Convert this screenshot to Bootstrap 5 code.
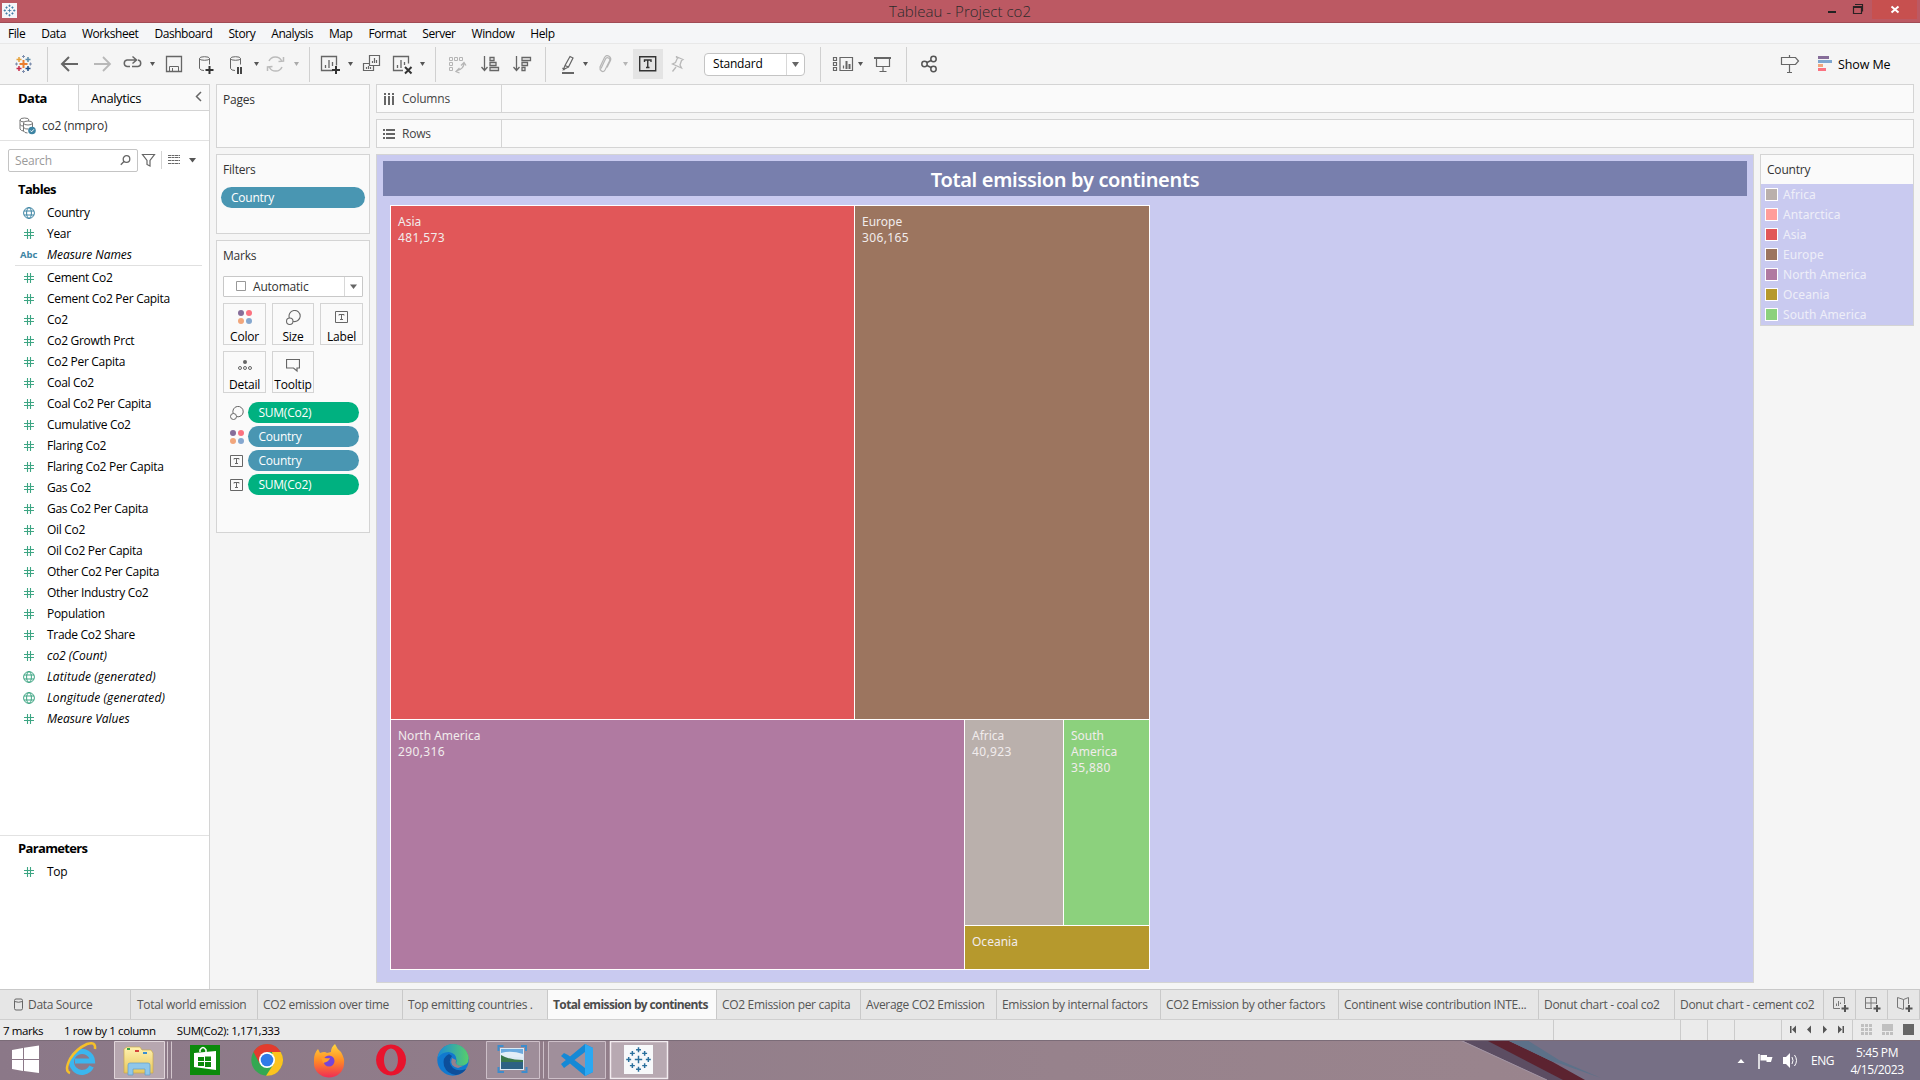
<!DOCTYPE html>
<html lang="en">
<head>
<meta charset="utf-8">
<title>Tableau - Project co2</title>
<link href="https://cdn.jsdelivr.net/npm/bootstrap@5.3.0/dist/css/bootstrap.min.css" rel="stylesheet">
<script src="https://cdn.jsdelivr.net/npm/bootstrap@5.3.0/dist/js/bootstrap.bundle.min.js"></script>
<style>
body{width:1920px;height:1080px;overflow:hidden;background:#f5f5f5;font:12px/16px "Open Sans","Noto Sans",sans-serif;color:#000;letter-spacing:-.2px}
svg{display:block;flex:none}
.titlebar{height:23px;background:#bc5963;border-bottom:1px solid #a04b55}
.titlebar .caption{font-size:15px;line-height:20px;color:#2b2b2b;letter-spacing:.03px;padding-top:1px;font-weight:300}
.menubar{height:21px;background:#f5f6f8;border-bottom:1px solid #e8e8e8;padding:2px 0 0 8px;gap:16px;letter-spacing:-.43px}
.toolbar{height:40px}
.workspace{height:905px}
.datapane{width:210px;background:#fff;border-right:1px solid #d4d4d4;border-top:1px solid #d4d4d4}
.panetabs{height:26px;font-size:13px}
.tab-data{width:78px;padding-left:18px;font-weight:700;letter-spacing:-.5px;padding-top:5px}
.tab-an{border-left:1px solid #d4d4d4;border-bottom:1px solid #d4d4d4;background:#fafafa;padding:5px 7px 0 12px;letter-spacing:-.4px}
.tab-an svg{margin-top:1px}
.source{height:30px;border-bottom:1px solid #e2e2e2;color:#333;padding-left:18px;gap:5px}
.source span{padding-top:1px;letter-spacing:-.25px}
.finder{height:39px;padding:8px 0 0 8px}
.searchbox{width:130px;height:23px;border:1px solid #c4c4c4;border-radius:2px;color:#9a9a9a;padding:0 6px}
.heading{font-size:13px;font-weight:700;padding-left:18px;letter-spacing:-.65px}
.fields{padding-top:5px}
.finder+.heading{padding-top:1px}
.field{height:21px;padding-left:23px;gap:12px;letter-spacing:-.3px}
.field svg{width:12px}
.abc{font-size:9.5px;font-weight:700;color:#3d84a3;width:18px;margin:0 -3px;letter-spacing:0}
.fields i{letter-spacing:-.05px}
.geo{color:#3da583}
.fields .geo i{letter-spacing:.1px}
.dim-geo{color:#3d84a3}
.cut{height:0;border-top:1px solid #e0e0e0;margin:0 7px 0 15px}
.meas{padding-top:1px}
.params{border-top:1px solid #e2e2e2;height:154px;padding-top:4px}
.params .field{margin-top:5px}
.shelves{width:154px;margin-left:6px;gap:6px;color:#333}
.shelf{background:#fafafa;border:1px solid #d4d4d4}
.shelf .cap{padding:7px 0 1px 6px}
.shelf-pages{height:64px}.shelf-filters{height:80px}.shelf-marks{height:293px}
.shelf-filters .pill{margin:8px 4px 0;padding-left:10px}
.pill{height:21px;border-radius:11px;background:#4996b2;color:#fff;padding-left:10.5px;line-height:21px;letter-spacing:-.25px}
.pill.m{background:#00b180}
.mark-type{width:140px;height:21px;border:1px solid #c8c8c8;border-radius:1px;margin:11px 0 0 6px}
.mark-grid{display:grid;grid-template-columns:43px 42px 43px;grid-auto-rows:42px;gap:6px;padding:6px 6px 0}
.mark-grid>div{border:1px solid #d4d4d4;color:#000;display:flex;flex-direction:column;align-items:center;justify-content:space-between;padding:6px 0 0;line-height:15px;letter-spacing:-.2px}
.encodings{padding:9px 10px 0 13px;display:flex;flex-direction:column;gap:3px}
.encodings .pill{width:111px}
.enc{display:flex;align-items:center;gap:4px}
.main{width:1538px;margin-left:6px}
.axis-shelf{height:29px;background:#fafafa;border:1px solid #d4d4d4;margin-bottom:6px;color:#444}
.axis-shelf>div{width:125px;border-right:1px solid #d4d4d4;padding-left:6px;gap:7px}
.sheet{width:1378px;height:829px;background:#c9caf0;border:1px solid #d4d4d4;padding:6px 6px 0}
.sheet-title{height:35px;background:#787fad;color:#fff;font:600 20px/37px "Noto Sans","Open Sans",sans-serif;letter-spacing:-.33px}
.treemap{width:760px;height:765px;background:#fff;padding:1px;gap:1px;margin:9px 0 0 7px;color:#f1ecec;font-family:"Noto Sans",sans-serif;letter-spacing:0}
.treemap .cell{padding:8px 7px}
.treemap .num{letter-spacing:.35px}
.treemap .g{gap:1px}
.treemap .lower{height:249px}
.asia{background:#e15759;width:463px}.europe{background:#9c755f;width:294px}
.namer{background:#b07aa1;width:573px}.africa{background:#bab0ac;width:98px}
.samer{background:#8cd17d;width:85px}.oceania{background:#b6992d;height:43px}
.antarctica{background:#ff9d9a}
.legendbox{width:154px;height:172px;border:1px solid #d4d4d4;background:#c9caf0;margin-left:6px}
.legendbox .cap{height:29px;background:#fafafa;color:#333;padding:7px 0 0 6px}
.legendbox .it{height:20px;padding:1px 0 0 4px;gap:5px;color:#eeeef8;font-family:"Noto Sans",sans-serif;letter-spacing:.1px}
.legendbox .sw{width:13px;height:13px;border:1px solid #fff}
.zoomfit{width:101px;height:23px;border:1px solid #c4c4c4}
.showme{font-size:12.5px;letter-spacing:-.1px;padding-top:1px}
.sheettabs{height:31px;border-top:1px solid #c9c9c9;border-bottom:1px solid #cfcfcf;background:#e6e6e6;color:#555;letter-spacing:-.32px}
.sheettabs>div{border-right:1px solid #c9c9c9;padding-left:5px;white-space:nowrap;display:flex;align-items:center;flex:none}
.sheettabs .on{background:#fafafa;font-weight:700;letter-spacing:-.62px;color:#4c4c4c}
.sheettabs .w1{width:131px}.sheettabs .w2{width:127px;padding-left:6px}.sheettabs .w3{width:145px}.sheettabs .w4{width:145px}.sheettabs .w5{width:169px}.sheettabs .w6{width:144px}.sheettabs .w7{width:136px}.sheettabs .w8{width:164px}.sheettabs .w9{width:178px}.sheettabs .w10{width:200px}.sheettabs .w11{width:136px}.sheettabs .w12{width:149px}.sheettabs .wi{width:32px;padding-left:8px}
.statusbar{height:20px;background:#ebebeb;padding-left:3px;font-size:11.5px;letter-spacing:-.4px}
.statusbar span{margin-right:21px;padding-top:2px}
.taskbar{height:40px;background:linear-gradient(90deg,#8b7888,#97828c 55%,#9b868e);position:relative;border-top:1px solid #7b6c78}
.taskbar>svg.paper{position:absolute;left:1400px;top:0}
.taskbar>.over{position:relative}
.lang{width:30px;padding-left:5px;letter-spacing:-.5px}
.clock{color:#fff;width:84px;padding:3px 2px 0 0;line-height:17px;letter-spacing:-.4px}
</style>
</head>
<body class="d-flex flex-column">
<svg width="0" height="0" class="position-absolute">
<symbol id="hash" viewBox="0 0 12 12"><path d="M4.500 1v10M7.500 1v10M1 4.500h10M1 7.500h10" stroke="#3da583" stroke-width="1.100" fill="none"/></symbol>
<symbol id="globe" viewBox="0 0 12 12"><g fill="none" stroke="currentColor"><circle cx="6" cy="6" r="5.400"/><ellipse cx="6" cy="6" rx="2.400" ry="5.400"/><path d="M1 4h10M1 8h10"/></g></symbol>
<symbol id="tbox" viewBox="0 0 14 14"><path d="M.5 1.500h12v11H.5z" fill="none" stroke="#666"/><path d="M4 5.500v-1h5v1M6.500 4.500v5M5 9.500h3" fill="none" stroke="#666"/></symbol>
<symbol id="dots" viewBox="0 0 14 14"><circle cx="3" cy="3" r="3" fill="#866d99"/><circle cx="11" cy="3" r="3" fill="#fb7280"/><circle cx="3" cy="11" r="3" fill="#f1a67c"/><circle cx="11" cy="11" r="3" fill="#85a7cf"/></symbol>
<symbol id="size" viewBox="0 0 14 14"><g fill="none" stroke="#666"><path d="M3.200 7.500A5.200 5.200 0 1 1 6.600 10.600"/><circle cx="3.500" cy="10.500" r="3"/></g></symbol>
<symbol id="plusmark" viewBox="0 0 22 22"><g fill="none" stroke="#2a6f9c" stroke-width="1.200"><path d="M11 8v6M8 11h6M6 4v4M4 6h4M16 4v4M14 6h4M6 14v4M4 16h4M16 14v4M14 16h4M11 1v4M9 3h4M11 17v4M9 19h4M3 9v4M1 11h4M19 9v4M17 11h4"/></g></symbol>
</svg>

<header class="titlebar d-flex flex-shrink-0">
<svg width="810" height="22" viewBox="0 0 810 22"><path d="M2 3h15v15H2z" fill="#f5f5f8"/><use href="#plusmark" x="3" y="4" width="13" height="13"/></svg>
<div class="caption text-center flex-grow-1">Tableau - Project co2</div>
<svg width="810" height="22" viewBox="1110 0 810 22"><path d="M1828 11h8v2h-8z" fill="#222"/><path d="M1853.500 6.500h8v7h-8zM1853 7.500h9M1855 4.500h7.500v7" fill="none" stroke="#2a2224" stroke-width="1.200"/><path d="M1872 0h45v19h-45z" fill="#c7504f"/><path d="M1891.500 6.500l7 6M1898.500 6.500l-7 6" stroke="#fff" stroke-width="2"/></svg>
</header>

<nav class="menubar d-flex align-items-center flex-shrink-0"><span>File</span><span>Data</span><span>Worksheet</span><span>Dashboard</span><span>Story</span><span>Analysis</span><span>Map</span><span>Format</span><span>Server</span><span>Window</span><span>Help</span></nav>

<div class="toolbar d-flex flex-shrink-0">
<svg width="48" height="40" viewBox="0 44 48 40" fill="none" stroke-width="1.500"><path d="M23.500 60v8M19.500 64h8" stroke="#eb7d2f" stroke-width="2"/><path d="M19 57v5M16.500 59.500h5" stroke="#e5a13a"/><path d="M28 57v5M25.500 59.500h5" stroke="#5b8aa8"/><path d="M19 66v5M16.500 68.500h5" stroke="#c72b4a"/><path d="M28 66v5M25.500 68.500h5" stroke="#1f4b84"/><path d="M23.500 55v3M22 56.500h3M23.500 70v3M22 71.500h3M16.500 62.500v3M15 64h3M30.500 62.500v3M29 64h3" stroke="#7f8fae" stroke-width="1"/><path d="M47.500 47v35" stroke="#d0d0d0" stroke-width="1"/></svg>
<svg width="71" height="40" viewBox="48 44 71 40" fill="none"><path d="M69 57l-7 7 7 7M62 64h16" stroke="#666" stroke-width="2"/><path d="M103 57l7 7-7 7M94 64h16" stroke="#b8b8b8" stroke-width="1.800"/></svg>
<svg width="42" height="40" viewBox="119 44 42 40" fill="none" stroke="#666" stroke-width="1.500"><path d="M130 66.500h-3a3.300 3.300 0 0 1 0-6.500h9M132.500 56.500l4 3.500-4 3.500M138 60a3.300 3.300 0 0 1 0 6.500h-6"/><path d="M150 62h5l-2.500 4z" fill="#555" stroke="none"/></svg>
<svg width="32" height="40" viewBox="161 44 32 40" fill="none" stroke="#666"><path d="M166.500 56.500h15v15h-15z" stroke-width="1.300"/><path d="M169.500 71.500v-5h9v5M172.500 71v-3"/></svg>
<svg width="69" height="40" viewBox="193 44 69 40" fill="none" stroke="#666"><ellipse cx="204.500" cy="58.500" rx="5" ry="1.800"/><path d="M199.500 58.500v10q1 2 4.500 2M209.500 58.500v6"/><path d="M209.500 66v8M205.500 70h8" stroke="#333" stroke-width="2"/><ellipse cx="235.500" cy="58.500" rx="5" ry="1.800"/><path d="M230.500 58.500v10q1 2 4.500 2M240.500 58.500v6"/><path d="M238 67v7M241 67v7" stroke="#333" stroke-width="1.800"/><path d="M254 62h5l-2.500 4z" fill="#555" stroke="none"/></svg>
<svg width="48" height="40" viewBox="262 44 48 40" fill="none" stroke="#bbb" stroke-width="1.500"><path d="M269 61a7 7 0 0 1 12.500-.5M282 67a7 7 0 0 1-12.500.5M278.500 61.500l5-.5v-4M272.500 66.500l-5 .5v4"/><path d="M294 62h5l-2.500 4z" fill="#aaa" stroke="none"/><path d="M309.500 47v35" stroke="#d0d0d0" stroke-width="1"/></svg>
<svg width="47" height="40" viewBox="310 44 47 40" fill="none" stroke="#666" stroke-width="1.300"><path d="M333 70.500h-11.500v-14h15v9M325.500 68v-3M329 68v-8M332.500 66v-4"/><path d="M336 66v8M332 70h8" stroke="#333" stroke-width="2"/><path d="M348 62h5l-2.500 4z" fill="#555" stroke="none"/></svg>
<svg width="32" height="40" viewBox="357 44 32 40" fill="none" stroke="#666" stroke-width="1.200"><path d="M369.500 55.500h10v10h-10zM372.500 63v-2M374.500 63v-5M376.500 63v-3M369 63.500h-5.500v7h10v-4.500M366.500 69v-2M368.500 69v-3M370.500 69v-2"/></svg>
<svg width="47" height="40" viewBox="389 44 47 40" fill="none" stroke="#666" stroke-width="1.300"><path d="M403 70.500h-9.500v-14h15v7M397.500 68v-3M401 68v-8M404.500 65v-3"/><path d="M405 67l6.500 6.500M411.500 67l-6.500 6.500" stroke="#333" stroke-width="2"/><path d="M420 62h5l-2.500 4z" fill="#555" stroke="none"/><path d="M435.500 47v35" stroke="#d0d0d0" stroke-width="1"/></svg>
<svg width="110" height="40" viewBox="436 44 110 40" fill="none" stroke="#666" stroke-width="1.300"><g stroke="#b5b5b5"><path d="M449.500 57.500h3v3h-3zM454.500 57.500h3v3h-3zM459.500 57.500h3v3h-3zM449.500 62.500h3v3h-3zM449.500 67.500h3v3h-3z" stroke-width="1"/><path d="M464 63q0 6-7 7.500M461 65.500l3-3 2 3M459.500 68l-3.500 3.500 3.500 1.500"/></g><path d="M484.500 56v14M481.500 67l3 3.500 3-3.500M490 57.500h4v3h-4zM490 62.500h6v3h-6zM490 67.500h8.500v3H490z"/><path d="M516.500 56v14M513.500 67l3 3.500 3-3.500M522 57.500h8.500v3H522zM522 62.500h5.500v3H522zM522 67.500h3v3h-3z"/><path d="M545.500 47v35" stroke="#d0d0d0" stroke-width="1"/></svg>
<svg width="87" height="40" viewBox="546 44 87 40" fill="none" stroke="#666" stroke-width="1.200"><path d="M570 56.500l3 1.500-4.500 9-3.500-1.500zM565 65.500l-1.500 4 5-2.500M562.500 68l2 2"/><path d="M562 73h12" stroke-width="2"/><path d="M583 62h5l-2.500 4z" fill="#555" stroke="none"/><g stroke="#b5b5b5"><path d="M601 68.500l4.500-9.500q1-2 3-1t1 3l-4.500 9q-1.500 2.500-3.500 1t-1.500-4l4.500-9.500q2-3 4.500-1.200t1.500 4.200l-3.500 7"/></g><path d="M623 62h5l-2.500 4z" fill="#b5b5b5" stroke="none"/></svg>
<svg width="30" height="40" viewBox="633 44 30 40" fill="none" stroke="#333" stroke-width="1.400"><path d="M633 49h30v30h-30z" fill="#e4e4e4" stroke="none"/><path d="M639.700 56.700h16v14h-16zM644.500 62v-2h6.500v2M647.750 60v7.500M646 67.500h3.500"/></svg>
<svg width="41" height="40" viewBox="663 44 41 40" fill="none" stroke="#b8b8b8" stroke-width="1.300"><path d="M676 56.500l7 3-1.500 1-1.500 4.500 1.500 3-9-4 3-1.500 2-4.500zM676 67l-3.500 4.500"/></svg>
<div class="d-flex align-items-center pb-1"><div class="zoomfit d-flex align-items-center bg-white rounded-1 mt-1"><span class="ps-2 flex-grow-1">Standard</span><svg width="18" height="21" viewBox="0 0 18 21"><path d="M.5 0v21" stroke="#d8d8d8"/><path d="M6 8h7l-3.500 5z" fill="#666"/></svg></div></div>
<svg width="102" height="40" viewBox="805 44 102 40" fill="none" stroke="#666" stroke-width="1.200"><path d="M820.500 47v35M906.500 47v35" stroke="#d0d0d0" stroke-width="1"/><path d="M833.500 57.500h3v3h-3zM833.500 62.500h3v3h-3zM833.500 67.500h3v3h-3zM840 57.500h12.500v13H840zM843.500 68.500v-3"/><path d="M846.500 69v-8M849.500 69v-5" stroke-width="2"/><path d="M858 62h5l-2.500 4z" fill="#555" stroke="none"/><path d="M876.500 58v8.500h13V58M883 66.500v5M879.500 71.500h7"/><path d="M874 58h17" stroke-width="2"/></svg>
<svg width="863" height="40" viewBox="907 44 863 40" fill="none" stroke="#555" stroke-width="1.500"><circle cx="924.500" cy="64" r="2.700"/><circle cx="933.500" cy="59" r="2.700"/><circle cx="933.500" cy="69" r="2.700"/><path d="M927 62.500l4-2M927 65.500l4 2"/></svg>
<svg width="68" height="40" viewBox="1770 44 68 40" fill="none" stroke="#666" stroke-width="1.200"><path d="M1781.500 57.500h14l3 3.500-3 3.500h-14zM1789.500 55v2M1789.500 65v7.500M1787 72.500h5"/><g stroke="none"><path d="M1818 56h11v3h-11z" fill="#866d99"/><path d="M1818 60h14v3h-14z" fill="#7ea6cf"/><path d="M1818 64h5v3h-5z" fill="#f1a67c"/><path d="M1818 68h8v3h-8z" fill="#fb7280"/></g></svg>
<span class="showme align-self-center">Show Me</span>
</div>

<main class="workspace d-flex flex-shrink-0">
<aside class="datapane d-flex flex-column flex-shrink-0">
<div class="panetabs d-flex"><div class="tab-data">Data</div><div class="tab-an flex-grow-1 d-flex justify-content-between"><span>Analytics</span><svg width="7" height="12" viewBox="0 0 7 12"><path d="M6 1L1.500 5.500 6 10" fill="none" stroke="#666" stroke-width="1.500"/></svg></div></div>
<div class="source d-flex align-items-center flex-shrink-0"><svg width="19" height="18" viewBox="0 0 19 18" fill="none" stroke="#777"><ellipse cx="6.500" cy="3" rx="4.500" ry="2"/><path d="M2 3v9q1 2 4 2M2 7.500q1 1.500 3 1.500"/><ellipse cx="10" cy="6" rx="4.500" ry="2" fill="#fff"/><path d="M5.500 6v8q1 2 4 2M14.500 6v4M5.500 10.500q2 2 5 1.500"/><circle cx="14" cy="13.500" r="3.800" fill="#3d84a3" stroke="none"/><path d="M12.300 13.500l1.300 1.300 2.300-2.500" stroke="#fff"/></svg><span>co2 (nmpro)</span></div>
<div class="finder d-flex"><div class="searchbox d-flex align-items-center justify-content-between"><span>Search</span><svg width="11" height="11" viewBox="0 0 11 11" fill="none" stroke="#666" stroke-width="1.300"><circle cx="6.500" cy="4" r="3.300"/><path d="M4.200 6.300L.8 9.800"/></svg></div>
<svg width="60" height="23" viewBox="138 149 60 23" fill="none" stroke="#666"><path d="M142.500 154.500h12l-4.500 6v5.500l-3-1.500v-4z" stroke-width="1.200"/><path d="M161.500 151v18" stroke="#d4d4d4"/><path d="M168 155.500h12M168 157.500h12M168 160.500h12M168 163.500h12" stroke-dasharray="3 .5" stroke-width="1"/><path d="M189 158h7l-3.500 4.500z" fill="#555" stroke="none"/></svg></div>
<div class="heading">Tables</div>
<div class="fields">
<div class="field d-flex align-items-center dim-geo"><svg height="12"><use href="#globe"/></svg><span class="text-black">Country</span></div>
<div class="field d-flex align-items-center"><svg height="12"><use href="#hash"/></svg>Year</div>
<div class="field d-flex align-items-center"><span class="abc">Abc</span><i>Measure Names</i></div>
<div class="cut"></div>
<div class="meas">
<div class="field d-flex align-items-center"><svg height="12"><use href="#hash"/></svg>Cement Co2</div>
<div class="field d-flex align-items-center"><svg height="12"><use href="#hash"/></svg>Cement Co2 Per Capita</div>
<div class="field d-flex align-items-center"><svg height="12"><use href="#hash"/></svg>Co2</div>
<div class="field d-flex align-items-center"><svg height="12"><use href="#hash"/></svg>Co2 Growth Prct</div>
<div class="field d-flex align-items-center"><svg height="12"><use href="#hash"/></svg>Co2 Per Capita</div>
<div class="field d-flex align-items-center"><svg height="12"><use href="#hash"/></svg>Coal Co2</div>
<div class="field d-flex align-items-center"><svg height="12"><use href="#hash"/></svg>Coal Co2 Per Capita</div>
<div class="field d-flex align-items-center"><svg height="12"><use href="#hash"/></svg>Cumulative Co2</div>
<div class="field d-flex align-items-center"><svg height="12"><use href="#hash"/></svg>Flaring Co2</div>
<div class="field d-flex align-items-center"><svg height="12"><use href="#hash"/></svg>Flaring Co2 Per Capita</div>
<div class="field d-flex align-items-center"><svg height="12"><use href="#hash"/></svg>Gas Co2</div>
<div class="field d-flex align-items-center"><svg height="12"><use href="#hash"/></svg>Gas Co2 Per Capita</div>
<div class="field d-flex align-items-center"><svg height="12"><use href="#hash"/></svg>Oil Co2</div>
<div class="field d-flex align-items-center"><svg height="12"><use href="#hash"/></svg>Oil Co2 Per Capita</div>
<div class="field d-flex align-items-center"><svg height="12"><use href="#hash"/></svg>Other Co2 Per Capita</div>
<div class="field d-flex align-items-center"><svg height="12"><use href="#hash"/></svg>Other Industry Co2</div>
<div class="field d-flex align-items-center"><svg height="12"><use href="#hash"/></svg>Population</div>
<div class="field d-flex align-items-center"><svg height="12"><use href="#hash"/></svg>Trade Co2 Share</div>
<div class="field d-flex align-items-center"><svg height="12"><use href="#hash"/></svg><i>co2 (Count)</i></div>
<div class="field d-flex align-items-center geo"><svg height="12"><use href="#globe"/></svg><i class="text-black">Latitude (generated)</i></div>
<div class="field d-flex align-items-center geo"><svg height="12"><use href="#globe"/></svg><i class="text-black">Longitude (generated)</i></div>
<div class="field d-flex align-items-center"><svg height="12"><use href="#hash"/></svg><i>Measure Values</i></div>
</div></div>
<div class="params mt-auto"><div class="heading">Parameters</div><div class="field d-flex align-items-center"><svg height="12"><use href="#hash"/></svg>Top</div></div>
</aside>

<section class="shelves d-flex flex-column flex-shrink-0">
<div class="shelf shelf-pages"><div class="cap">Pages</div></div>
<div class="shelf shelf-filters"><div class="cap">Filters</div><div class="pill">Country</div></div>
<div class="shelf shelf-marks"><div class="cap">Marks</div>
<div class="mark-type d-flex align-items-center bg-white"><svg width="29" height="19" viewBox="0 0 29 19"><path d="M12.500 4.500h9v9h-9z" fill="none" stroke="#999"/></svg><span class="flex-grow-1">Automatic</span><svg width="18" height="19" viewBox="0 0 18 19"><path d="M.5 0v19" stroke="#d8d8d8"/><path d="M6 7.500h7L9.500 12z" fill="#666"/></svg></div>
<div class="mark-grid">
<div><svg width="14" height="14"><use href="#dots"/></svg>Color</div>
<div><svg width="15" height="15"><use href="#size"/></svg>Size</div>
<div><svg width="14" height="14"><use href="#tbox"/></svg>Label</div>
<div><svg width="14" height="16" viewBox="0 0 14 16"><circle cx="7" cy="4" r="2" fill="#666"/><g fill="none" stroke="#666"><circle cx="2" cy="10" r="1.500"/><circle cx="7" cy="10" r="1.500"/><circle cx="12" cy="10" r="1.500"/></g></svg>Detail</div>
<div><svg width="14" height="16" viewBox="0 0 14 16"><path d="M.5 1.500h13v8.500H11v3l-3.500-3h-7z" fill="none" stroke="#666" stroke-width="1.200"/></svg>Tooltip</div>
</div>
<div class="encodings">
<div class="enc"><svg width="14" height="14"><use href="#size"/></svg><div class="pill m">SUM(Co2)</div></div>
<div class="enc"><svg width="14" height="14"><use href="#dots"/></svg><div class="pill">Country</div></div>
<div class="enc"><svg width="14" height="14"><use href="#tbox"/></svg><div class="pill">Country</div></div>
<div class="enc"><svg width="14" height="14"><use href="#tbox"/></svg><div class="pill m">SUM(Co2)</div></div>
</div></div>
</section>

<section class="main flex-shrink-0">
<div class="axis-shelf d-flex"><div class="d-flex align-items-center"><svg width="12" height="12" viewBox="0 0 12 12" fill="#666"><path d="M1 0h2v2H1zM5 0h2v2H5zM9 0h2v2H9zM1 3h2v9H1zM5 3h2v9H5zM9 3h2v9H9z"/></svg>Columns</div></div>
<div class="axis-shelf d-flex"><div class="d-flex align-items-center"><svg width="12" height="12" viewBox="0 0 12 12" fill="#666"><path d="M0 1h2v2H0zM0 5h2v2H0zM0 9h2v2H0zM3 1h9v2H3zM3 5h9v2H3zM3 9h9v2H3z"/></svg>Rows</div></div>
<div class="d-flex">
<div class="sheet">
<div class="sheet-title text-center">Total emission by continents</div>
<div class="treemap d-flex flex-column">
<div class="d-flex g flex-grow-1"><div class="cell asia">Asia<br><span class="num">481,573</span></div><div class="cell europe">Europe<br><span class="num">306,165</span></div></div>
<div class="d-flex g lower"><div class="cell namer">North America<br><span class="num">290,316</span></div>
<div class="d-flex flex-column g flex-grow-1"><div class="d-flex g flex-grow-1"><div class="cell africa">Africa<br><span class="num">40,923</span></div><div class="cell samer">South America<br><span class="num">35,880</span></div></div><div class="cell oceania">Oceania</div></div></div>
</div></div>
<div class="legendbox"><div class="cap">Country</div>
<div class="it d-flex align-items-center"><span class="sw africa"></span>Africa</div>
<div class="it d-flex align-items-center"><span class="sw antarctica"></span>Antarctica</div>
<div class="it d-flex align-items-center"><span class="sw asia"></span>Asia</div>
<div class="it d-flex align-items-center"><span class="sw europe"></span>Europe</div>
<div class="it d-flex align-items-center"><span class="sw namer"></span>North America</div>
<div class="it d-flex align-items-center"><span class="sw oceania"></span>Oceania</div>
<div class="it d-flex align-items-center"><span class="sw samer"></span>South America</div>
</div></div>
</section>
</main>

<div class="sheettabs d-flex flex-shrink-0">
<div class="w1"><svg width="19" height="14" viewBox="0 0 19 14" fill="none" stroke="#666"><rect x="9.500" y="1" width="8" height="11" rx="1.500"/><path d="M9.500 3.500q4 1.500 8 0"/></svg><span class="ps-1">Data Source</span></div>
<div class="w2">Total world emission</div><div class="w3">CO2 emission over time</div><div class="w4">Top emitting countries .</div><div class="w5 on">Total emission by continents</div><div class="w6">CO2 Emission per capita</div><div class="w7">Average CO2 Emission</div><div class="w8">Emission by internal factors</div><div class="w9">CO2 Emission by other factors</div><div class="w10">Continent wise contribution INTE...</div><div class="w11">Donut chart - coal co2</div><div class="w12">Donut chart - cement co2</div>
<div class="wi"><svg width="17" height="17" viewBox="0 0 17 17" fill="none" stroke="#777"><path d="M8 12.500H1.500v-11h11V8M4.500 10V7.500M6.500 10V5M8.500 8V6.500"/><path d="M13 9v7M9.500 12.500h7" stroke="#555" stroke-width="2"/></svg></div>
<div class="wi"><svg width="17" height="17" viewBox="0 0 17 17" fill="none" stroke="#777"><path d="M8 12.500H1.500v-11h11V8M1.500 7h11M7 1.500v11"/><path d="M13 9v7M9.500 12.500h7" stroke="#555" stroke-width="2"/></svg></div>
<div class="wi"><svg width="17" height="17" viewBox="0 0 17 17" fill="none" stroke="#777"><path d="M7.500 13v-9.500l-6-2v10l6 2M7.500 3.500l5-2V8"/><path d="M13 9v7M9.500 12.500h7" stroke="#555" stroke-width="2"/></svg></div>
</div>

<div class="statusbar d-flex align-items-center flex-shrink-0">
<span>7 marks</span><span>1 row by 1 column</span><span>SUM(Co2): 1,171,333</span>
<svg class="ms-auto" width="367" height="20" viewBox="1553 1020 367 20"><path d="M1553.500 1020v20M1680.500 1020v20M1707.500 1020v20M1734.500 1020v20M1781.500 1020v20M1852.500 1020v20" stroke="#cbcbcb"/><g fill="#555"><path d="M1790 1026h1.500v7h-1.500zM1796 1025.500v8l-4-4zM1811 1025.500v8l-4-4zM1823 1025.500v8l4-4zM1838 1025.500v8l4-4zM1842.500 1026h1.500v7h-1.500z"/></g><g fill="#c0c0c0"><path d="M1861 1024h3v3h-3zM1865 1024h3v3h-3zM1869 1024h3v3h-3zM1861 1028h3v3h-3zM1865 1028h3v3h-3zM1869 1028h3v3h-3zM1861 1032h3v3h-3zM1865 1032h3v3h-3zM1869 1032h3v3h-3zM1882 1024h11v7h-11zM1882 1032h3v3h-3zM1886 1032h3v3h-3zM1890 1032h3v3h-3z"/></g><path d="M1903 1024h11v11h-11z" fill="#666"/></svg>
</div>

<footer class="taskbar flex-shrink-0">
<svg class="paper" width="520" height="39" viewBox="1400 1041 520 39"><path d="M1508 1041h412v39h-360z" fill="#766f85"/><path d="M1461 1040l86 40h24l-70-40z" fill="#5c4d62"/><path d="M1486 1040h21l44 21 34 19h-22z" fill="#5c2330"/><path d="M1507 1040h20l32 20 42 18-40-14-10-3z" fill="#5c7189"/><path d="M1460 1040l87 40" stroke="#a294a4"/></svg>
<div class="over d-flex h-100">
<svg width="682" height="40" viewBox="0 1041 682 40">
<defs><linearGradient id="gf" x1="0" x2="0" y1="0" y2="1"><stop offset="0" stop-color="#fff2b0"/><stop offset="1" stop-color="#e8c75c"/></linearGradient><linearGradient id="ge" x1="0" x2="1" y1="0" y2="0"><stop offset="0" stop-color="#1a8ad8"/><stop offset="1" stop-color="#58cf6a"/></linearGradient><linearGradient id="gx" x1="0" x2="0" y1="0" y2="1"><stop offset="0" stop-color="#ffd83d"/><stop offset=".5" stop-color="#ff8a25"/><stop offset="1" stop-color="#ef2d55"/></linearGradient></defs>
<g fill="#fff"><path d="M12 1050l11-2v11H12zM24 1047.800l15-2.300v13.500H24zM12 1060h11v11l-11-2zM24 1060h15v13l-15-2z"/></g>
<path d="M91.500 1066.500a10.500 10.500 0 1 1 1-5.500H75" fill="none" stroke="#3bb6ee" stroke-width="5"/><path d="M70 1073q-6-2 0-14 6-10 17-15 9-3 8 5" fill="none" stroke="#f5c02a" stroke-width="2.500"/>
<path d="M114.500 1041.500h50v37h-50z" fill="#b7a7b0" stroke="#e0d5da"/><path d="M167.500 1041.500v37M171.500 1041.500v37" stroke="#d3c6cd"/>
<path d="M124 1049l3-2h13l2 3h9l2 3v20h-29z" fill="url(#gf)" stroke="#c9a94e" stroke-width=".7"/><path d="M127 1048h3v2h-3z" fill="#3aa548"/><path d="M135 1050h4v2h-4z" fill="#d5453a"/><path d="M143 1052h4v2h-4z" fill="#3c8fd0"/><path d="M128 1075v-10q0-2 2-2h18q2 0 2 2v10h-5v-6h-12v6z" fill="#8fc7ea" stroke="#5f9fca" stroke-width=".7"/>
<path d="M190 1045h30v30h-30z" fill="#0b8a0b"/><path d="M194 1053l22-2v19l-22-3z" fill="#fff"/><path d="M200 1052v-2q3-5 6 0v2" fill="none" stroke="#fff" stroke-width="1.500"/><path d="M198 1057h6v4h-6zM205 1056.500h6v4.500h-6zM198 1062h6v4h-6zM205 1062h6v5h-6z" fill="#0b8a0b"/>
<circle cx="267" cy="1060" r="15.700" fill="#33a852"/><path d="M253.500 1052A15.700 15.700 0 0 1 280.800 1052H267l-7 12z" fill="#e33b2e"/><path d="M280.700 1052A15.700 15.700 0 0 1 266 1075.700L274 1063.500 272 1052z" fill="#fcc31e"/><circle cx="267" cy="1060" r="8" fill="#fff"/><circle cx="267" cy="1060" r="6.300" fill="#2f7be8"/>
<path d="M314 1060q0-7 4-11l2 4q5-2 7 0l4-1q0-5 4-8 2 5 6 8 4 7 3 12a15 14 0 0 1-30-1z" fill="url(#gx)"/><circle cx="329" cy="1061" r="5.500" fill="#7545d8"/><path d="M321 1057q5 2 9 1-1 4-7 5z" fill="#ff9d2a"/>
<path fill-rule="evenodd" d="M391 1044.500a15 15.500 0 1 0 .1 0zM391 1048.500a7 11.500 0 1 1-.1 0z" fill="#e8142d"/>
<circle cx="453" cy="1060" r="15.700" fill="#1179cf"/><path d="M437.500 1058a15.700 15.700 0 0 1 31.200 0q0 8-9 8-5-1-3-5 0-8-8-9-7 0-11 6z" fill="url(#ge)"/><path d="M449 1054q-7 3-5 12 3 8 12 9 7-1 10-6-8 3-13-1-6-6-1-12z" fill="#0d4f9b"/><path d="M452 1058q-3 8 6 10l5-2q-9 0-7-6z" fill="#97828c"/>
<path d="M486.500 1041.500h53v37h-53z" fill="#9e8d99" stroke="#cdbfc8"/><path d="M543.500 1041.500v37" stroke="#cdbfc8"/><path d="M500 1048h24v22h-24z" fill="#dceaf5"/><path d="M501 1049h22v8h-22z" fill="#6aaadf"/><path d="M501 1053q10-3 22 1v3h-22z" fill="#e3eef7"/><path d="M501 1055q8 5 22 5v2h-22z" fill="#39774a"/><path d="M501 1062h22v7h-22z" fill="#2d6183"/><path d="M498.500 1051v-5h5M521 1046h5v5M526.500 1067v5h-5M504 1072h-5.500v-5" fill="none" stroke="#3d8ccc" stroke-width="2"/>
<path d="M548.500 1041.500h57v37h-57z" fill="#a08f9b" stroke="#cdbfc8"/><path d="M585 1044l8 4v24l-8 4-24-20 3-3 4 2 17 13v-16l-17 13-4 3-3-4z" fill="#1489d6"/><path d="M585 1044l8 4v24l-8 4z" fill="#2ba8f2"/>
<path d="M610.500 1041.500h57v37h-57z" fill="#b8a9b2" stroke="#f2ebef" stroke-width="1.500"/><path d="M624 1045h29v29h-29z" fill="#f7f8fa"/><use href="#plusmark" x="625" y="1046" width="27" height="27"/>
</svg>
<svg class="ms-auto" width="76" height="40" viewBox="1730 1041 76 40"><path d="M1737.500 1063h7l-3.500-4z" fill="#fff"/><path d="M1759 1054v15" stroke="#fff" stroke-width="1.500"/><path d="M1760.500 1055h6.500v2h5.500l-1.500 5h-4.500v-1.500h-6z" fill="#fff"/><path d="M1783 1057h3l4-4v15l-4-4h-3z" fill="#fff"/><path d="M1792 1057q2 3.500 0 7M1794.500 1055q4 5.500 0 11" fill="none" stroke="#fff"/></svg>
<span class="lang text-white align-self-center">ENG</span>
<div class="clock text-center">5:45 PM<br>4/15/2023</div>
</div>
</footer>
</body>
</html>
